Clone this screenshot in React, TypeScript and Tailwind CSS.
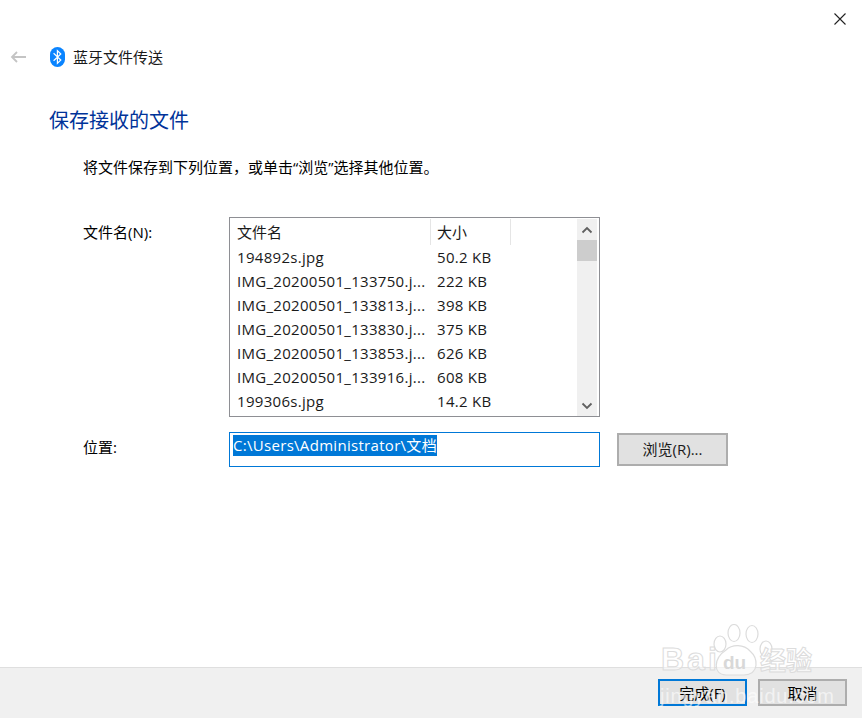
const files = [
  ["194892s.jpg", "50.2 KB"],
  ["IMG_20200501_133750.j...", "222 KB"],
  ["IMG_20200501_133813.j...", "398 KB"],
  ["IMG_20200501_133830.j...", "375 KB"],
  ["IMG_20200501_133853.j...", "626 KB"],
  ["IMG_20200501_133916.j...", "608 KB"],
  ["199306s.jpg", "14.2 KB"],
];

function Chevron({ up }: { up?: boolean }) {
  return (
    <svg width="12" height="8" viewBox="0 0 12 8" fill="none" stroke="#606060" strokeWidth="1.8">
      <path d={up ? "M1.5 6.5 L6 2 L10.5 6.5" : "M1.5 1.5 L6 6 L10.5 1.5"} />
    </svg>
  );
}

function Watermark() {
  return (
    <div className="absolute left-[660px] top-[624px] w-[170px] h-[85px] pointer-events-none">
      <svg className="absolute left-[0px] top-[0px]" width="170" height="60" viewBox="0 0 170 60" fill="rgba(255,255,255,0.55)" stroke="#dcdcdc" strokeWidth="1.2">
        <ellipse cx="60" cy="20" rx="6" ry="8" />
        <ellipse cx="74" cy="9" rx="6" ry="8.5" />
        <ellipse cx="92" cy="10" rx="6" ry="8.5" />
        <ellipse cx="106" cy="25" rx="6" ry="8" />
        <path d="M66 26 C72 20 84 20 90 27 C98 34 100 50 84 51 C78 51 72 51 66 51 C52 50 54 34 66 26Z" />
      </svg>
      <span className="absolute left-[1px] top-[15px] text-[32px] leading-[40px] tracking-[3px] font-bold text-white/50 [-webkit-text-stroke:1px_#dcdcdc] font-['Liberation_Sans',sans-serif]">Bai</span>
      <span className="absolute left-[63px] top-[28px] text-[19px] leading-[22px] font-bold text-[#d8d8d8] font-['Liberation_Sans',sans-serif]">du</span>
      <span className="absolute left-[100px] top-[21px] text-[26px] leading-[30px] font-bold text-white/50 [-webkit-text-stroke:1px_#dcdcdc] whitespace-nowrap">经验</span>
      <span className="absolute left-[0px] top-[60px] text-[20px] leading-[24px] tracking-[0.8px] text-white/60 font-['Liberation_Sans',sans-serif] whitespace-nowrap">jingyan.baidu.com</span>
    </div>
  );
}

export default function App() {
  return (
    <div className="relative flex flex-col w-[862px] h-[718px] bg-white overflow-hidden text-[15px] text-[#1a1a1a] font-['Open_Sans','Noto_Sans_CJK_SC',sans-serif]">
      <div className="flex justify-end h-[39px] pt-[12px] pr-[15px]">
        <svg width="14" height="14" viewBox="0 0 14 14" stroke="#222" strokeWidth="1.1">
          <path d="M1.5 1.5 L12.5 12.5 M12.5 1.5 L1.5 12.5" />
        </svg>
      </div>

      <div className="flex items-center h-[36px] pl-[10px]">
        <svg width="17" height="12" viewBox="0 0 17 12" fill="none" stroke="#c4c4c4" strokeWidth="1.8">
          <path d="M16 6 H2 M7 1 L2 6 L7 11" />
        </svg>
        <svg className="ml-[23px]" width="15" height="20" viewBox="0 0 15 20">
          <rect x="0" y="0" width="15" height="20" rx="7.5" fill="#0a84ff" />
          <path d="M3.6 6.2 L10.8 13 L7.4 16.4 V3.6 L10.8 7 L3.6 13.8" fill="none" stroke="#fff" strokeWidth="1.2" />
        </svg>
        <span className="ml-[8px] leading-[20px]">蓝牙文件传送</span>
      </div>

      <h1 className="pl-[49px] mt-[31px] text-[20px] leading-[30px] font-normal text-[#003399]">保存接收的文件</h1>

      <p className="pl-[83px] mt-[21px] leading-[20px] text-black">将文件保存到下列位置，或单击“浏览”选择其他位置。</p>

      <div className="flex mt-[40px] pl-[83px]">
        <label className="w-[146px] mt-[4px] leading-[22px] text-black">文件名(N):</label>
        <div className="flex w-[371px] h-[200px] border border-[#8e8f94] pt-[1px] pr-[2px]">
          <div className="flex-1 min-w-0">
            <div className="flex h-[26px] items-center">
              <span className="w-[201px] h-full pl-[7px] leading-[26px] border-r border-[#e5e5e5]">文件名</span>
              <span className="w-[80px] h-full pl-[6px] leading-[26px] border-r border-[#e5e5e5]">大小</span>
            </div>
            {files.map(([name, size]) => (
              <div key={name} className="flex h-[24px] items-center leading-[24px] whitespace-nowrap tracking-[0.3px]">
                <span className="w-[201px] pl-[7px]">{name}</span>
                <span className="pl-[6px]">{size}</span>
              </div>
            ))}
          </div>
          <div className="flex flex-col w-[20px] bg-[#f0f0f0]">
            <div className="flex items-center justify-center h-[21px]"><Chevron up /></div>
            <div className="h-[21px] bg-[#cdcdcd]" />
            <div className="flex-1" />
            <div className="flex items-center justify-center h-[21px]"><Chevron /></div>
          </div>
        </div>
      </div>

      <div className="flex mt-[15px] pl-[83px]">
        <label className="w-[146px] mt-[3px] leading-[24px] text-black">位置:</label>
        <div className="w-[371px] h-[35px] border border-[#0078d7] pl-[3px] pt-[2px]">
          <span className="block w-fit h-[21px] leading-[21px] bg-[#0078d7] text-white whitespace-nowrap tracking-[0.3px]">C:\Users\Administrator\文档</span>
        </div>
        <button className="w-[111px] h-[33px] ml-[17px] mt-[1px] bg-[#e1e1e1] border-2 border-[#adadad] text-[15px] text-[#1a1a1a]">浏览(R)...</button>
      </div>

      <div className="flex justify-end gap-[11px] mt-auto h-[51px] pt-[11px] pr-[15px] bg-[#f0f0f0] border-t border-[#dfdfdf]">
        <button className="w-[89px] h-[27px] bg-[#e1e1e1] border-2 border-[#0078d7] text-[15px] leading-[20px] text-black">完成(F)</button>
        <button className="w-[89px] h-[27px] bg-[#e1e1e1] border-2 border-[#adadad] text-[15px] leading-[20px] text-black">取消</button>
      </div>

      <Watermark />
    </div>
  );
}
